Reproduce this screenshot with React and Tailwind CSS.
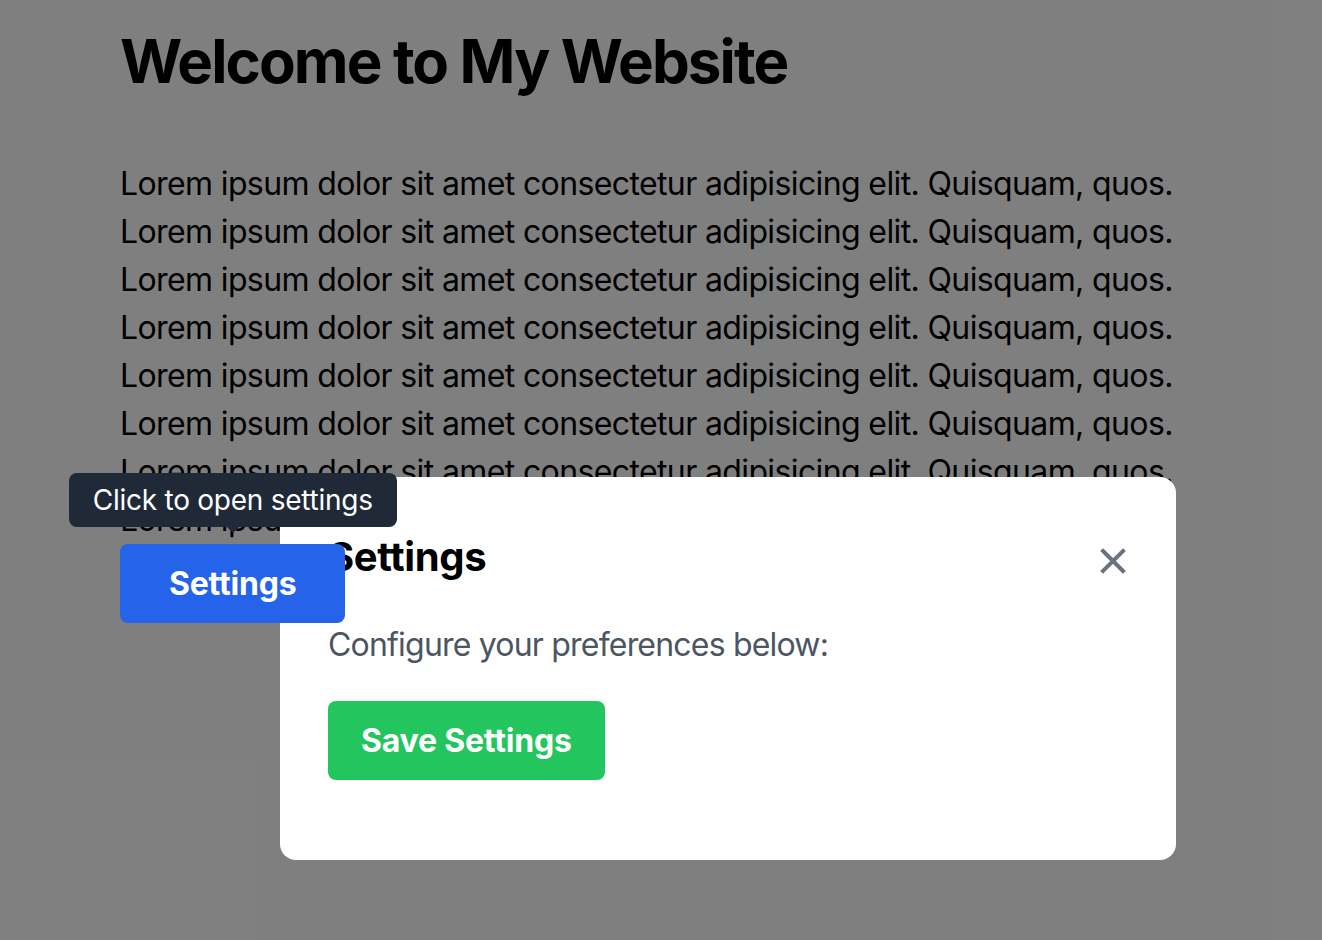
import { useState } from "react"

const LINE = "Lorem ipsum dolor sit amet consectetur adipisicing elit. Quisquam, quos."

const CloseIcon = () => (
  <svg width="26" height="26" viewBox="0 0 26 26" fill="none" stroke="currentColor" strokeWidth="4" strokeLinecap="square">
    <path d="M3 3L23 23M23 3L3 23" />
  </svg>
)

const App = () => {
  const [open, setOpen] = useState(true)

  return (
    <div className="relative min-h-[940px] bg-white text-black font-['Inter','Liberation_Sans',sans-serif]">
      {/* page content */}
      <div className="px-[120px] pt-[25px]">
        <h1 className="text-[60px] leading-[72px] font-bold tracking-[-1.9px]">Welcome to My Website</h1>
        <div className="mt-[63px] text-[32px] leading-[48px] tracking-[-0.62px]">
          {Array.from({ length: 8 }).map((_, i) => (
            <p key={i} className="whitespace-nowrap">{LINE}</p>
          ))}
        </div>
      </div>

      {/* overlay */}
      {open && <div className="absolute inset-0 bg-black/50" />}

      {/* trigger with tooltip, sits above overlay */}
      <div className="relative z-20 ml-[120px] inline-block">
        <div className="absolute bottom-full left-1/2 -translate-x-1/2 mb-[17px] whitespace-nowrap rounded-[8px] bg-[#1f2937] px-[24px] py-[7px] text-[28px] leading-[40px] tracking-[-0.25px] text-white">
          Click to open settings
          <span className="absolute left-1/2 top-full -translate-x-1/2 border-x-[6px] border-t-[6px] border-x-transparent border-t-[#1f2937]" />
        </div>
        <button
          onClick={() => setOpen(true)}
          className="rounded-[8px] bg-[#2563eb] px-[49px] py-[16px] text-[32px] leading-[47px] font-bold text-white tracking-[-0.2px]"
        >
          Settings
        </button>
      </div>

      {/* modal */}
      {open && (
        <div className="absolute left-[280px] top-[477px] z-10 w-[896px] rounded-[16px] bg-white px-[48px] pt-[52px] pb-[80px]">
          <div className="flex items-center justify-between">
            <h2 className="text-[40px] leading-[56px] font-bold tracking-[-0.4px]">Settings</h2>
            <button onClick={() => setOpen(false)} className="mr-[2px] mt-[8px] text-[#6b7280]">
              <CloseIcon />
            </button>
          </div>
          <p className="mt-[36px] text-[32px] leading-[48px] text-[#4b5563] tracking-[-0.8px]">Configure your preferences below:</p>
          <button className="mt-[32px] rounded-[8px] bg-[#22c55e] px-[33px] py-[16px] text-[32px] leading-[47px] font-bold text-white tracking-[-0.2px]">
            Save Settings
          </button>
        </div>
      )}
    </div>
  )
}

export default App
